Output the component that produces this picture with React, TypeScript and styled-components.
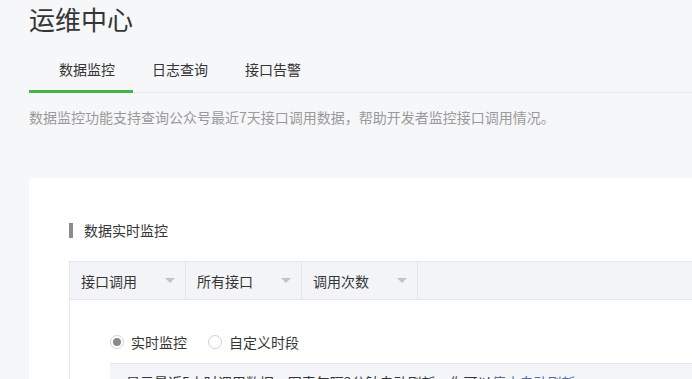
import * as React from 'react';
import styled, { createGlobalStyle } from 'styled-components';

const GlobalStyle = createGlobalStyle`
  html, body {
    margin: 0;
    padding: 0;
    overflow: hidden;
    background: #f6f7f9;
  }
  body {
    font-family: "Noto Sans CJK SC", "Noto Sans", sans-serif;
    color: #353535;
  }
`;

const tabs = ['数据监控', '日志查询', '接口告警'];
const filters = ['接口调用', '所有接口', '调用次数'];

export default function App() {
  const [activeTab, setActiveTab] = React.useState(0);
  const [mode, setMode] = React.useState<'realtime' | 'custom'>('realtime');

  return (
    <>
      <GlobalStyle />
      <Page>
        <Title>运维中心</Title>
        <TabList>
          {tabs.map((t, i) => (
            <Tab key={t} $active={i === activeTab} onClick={() => setActiveTab(i)}>
              {t}
            </Tab>
          ))}
        </TabList>
        <Desc>数据监控功能支持查询公众号最近7天接口调用数据，帮助开发者监控接口调用情况。</Desc>
        <Card>
          <SectionTitle>数据实时监控</SectionTitle>
          <FilterBar>
            {filters.map(f => (
              <FilterCell key={f}>
                <span>{f}</span>
                <Caret />
              </FilterCell>
            ))}
          </FilterBar>
          <Panel>
            <RadioRow>
              <RadioLabel onClick={() => setMode('realtime')}>
                <RadioDot $checked={mode === 'realtime'} />
                实时监控
              </RadioLabel>
              <RadioLabel onClick={() => setMode('custom')}>
                <RadioDot $checked={mode === 'custom'} />
                自定义时段
              </RadioLabel>
            </RadioRow>
            <InfoBox>
              显示最近5小时调用数据，图表每隔2分钟自动刷新，你可以<Link>停止自动刷新</Link>
            </InfoBox>
          </Panel>
        </Card>
      </Page>
    </>
  );
}

const Page = styled.div`
  width: 1100px;
  padding-left: 29px;
`;

const Title = styled.h1`
  margin: 0;
  padding-top: 1px;
  font-size: 26px;
  font-weight: normal;
  line-height: 36px;
  color: #353535;
`;

const TabList = styled.div`
  display: flex;
  margin-top: 11px;
  border-bottom: 1px solid #e7e7eb;
`;

const Tab = styled.div<{ $active: boolean }>`
  padding: 0 18px 0 19px;
  line-height: 42px;
  font-size: 14px;
  color: #353535;
  cursor: pointer;
  margin-bottom: -1px;
  border-bottom: 3px solid ${p => (p.$active ? '#44b549' : 'transparent')};
  &:first-child {
    padding-left: 30px;
  }
`;

const Desc = styled.p`
  margin: 14px 0 0;
  font-size: 14px;
  line-height: 20px;
  color: #9a9a9a;
`;

const Card = styled.div`
  margin-top: 51px;
  background: #fff;
  border-radius: 4px 0 0 0;
  padding: 44px 0 40px 40px;
`;

const SectionTitle = styled.div`
  display: flex;
  align-items: center;
  gap: 11px;
  font-size: 14px;
  line-height: 16px;
  color: #353535;
  &::before {
    content: '';
    width: 4px;
    height: 15px;
    background: #8d8d8d;
  }
`;

const FilterBar = styled.div`
  display: flex;
  margin-top: 23px;
  height: 37px;
  background: #f3f4f7;
  border: 1px solid #e4e6eb;
`;

const FilterCell = styled.div`
  width: 116px;
  display: flex;
  align-items: center;
  justify-content: space-between;
  padding: 0 10px 0 11px;
  box-sizing: border-box;
  border-right: 1px solid #e4e6eb;
  font-size: 14px;
  color: #353535;
`;

const Caret = styled.i`
  width: 0;
  height: 0;
  border-left: 5px solid transparent;
  border-right: 5px solid transparent;
  border-top: 5px solid #c4c4c4;
`;

const Panel = styled.div`
  border: 1px solid #e4e6eb;
  border-top: none;
  padding: 32px 0 20px 40px;
`;

const RadioRow = styled.div`
  display: flex;
  gap: 21px;
  font-size: 14px;
  line-height: 20px;
`;

const RadioLabel = styled.label`
  display: flex;
  align-items: center;
  gap: 7px;
  cursor: pointer;
  color: #353535;
`;

const RadioDot = styled.span<{ $checked: boolean }>`
  width: 12px;
  height: 12px;
  border: 1px solid #d3d3d3;
  border-radius: 50%;
  background: #fff;
  display: flex;
  align-items: center;
  justify-content: center;
  &::after {
    content: '';
    width: 8px;
    height: 8px;
    border-radius: 50%;
    background: ${p => (p.$checked ? '#8a8a8a' : 'transparent')};
  }
`;

const InfoBox = styled.div`
  margin-top: 11px;
  background: #f4f5f9;
  border-top: 1px solid #e7e8ec;
  padding: 8px 16px;
  font-size: 14px;
  line-height: 20px;
  color: #353535;
`;

const Link = styled.a`
  color: #576b95;
`;
